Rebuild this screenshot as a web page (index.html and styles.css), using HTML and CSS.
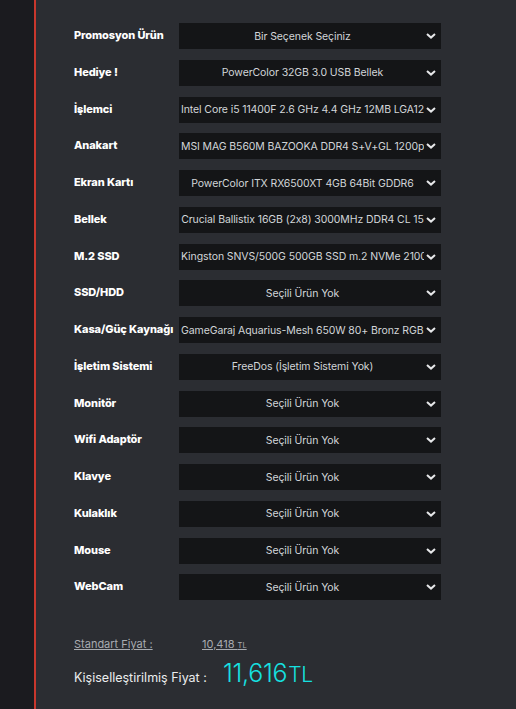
FILE: index.html
```html
<!DOCTYPE html>
<html lang="tr">
<head>
<meta charset="utf-8">
<link rel="stylesheet" href="styles.css">
</head>
<body>
<div class="page">
  <aside class="side"></aside>
  <main class="main">
    <div class="rows">
      <div class="row"><span class="label">Promosyon Ürün</span><div class="select"><span class="val">Bir Seçenek Seçiniz</span><svg class="chev" viewBox="0 0 10 6"><path d="M1 1l4 3.6L9 1"/></svg></div></div>
      <div class="row"><span class="label">Hediye !</span><div class="select"><span class="val">PowerColor 32GB 3.0 USB Bellek</span><svg class="chev" viewBox="0 0 10 6"><path d="M1 1l4 3.6L9 1"/></svg></div></div>
      <div class="row"><span class="label">İşlemci</span><div class="select"><span class="val">Intel Core i5 11400F 2.6 GHz 4.4 GHz 12MB LGA1200 İşlemci</span><svg class="chev" viewBox="0 0 10 6"><path d="M1 1l4 3.6L9 1"/></svg></div></div>
      <div class="row"><span class="label">Anakart</span><div class="select"><span class="val">MSI MAG B560M BAZOOKA DDR4 S+V+GL 1200p: Anakart</span><svg class="chev" viewBox="0 0 10 6"><path d="M1 1l4 3.6L9 1"/></svg></div></div>
      <div class="row"><span class="label">Ekran Kartı</span><div class="select"><span class="val">PowerColor ITX RX6500XT 4GB 64Bit GDDR6</span><svg class="chev" viewBox="0 0 10 6"><path d="M1 1l4 3.6L9 1"/></svg></div></div>
      <div class="row"><span class="label">Bellek</span><div class="select"><span class="val">Crucial Ballistix 16GB (2x8) 3000MHz DDR4 CL 15</span><svg class="chev" viewBox="0 0 10 6"><path d="M1 1l4 3.6L9 1"/></svg></div></div>
      <div class="row"><span class="label">M.2 SSD</span><div class="select"><span class="val">Kingston SNVS/500G 500GB SSD m.2 NVMe 2100/1700</span><svg class="chev" viewBox="0 0 10 6"><path d="M1 1l4 3.6L9 1"/></svg></div></div>
      <div class="row"><span class="label">SSD/HDD</span><div class="select"><span class="val">Seçili Ürün Yok</span><svg class="chev" viewBox="0 0 10 6"><path d="M1 1l4 3.6L9 1"/></svg></div></div>
      <div class="row"><span class="label">Kasa/Güç Kaynağı</span><div class="select"><span class="val">GameGaraj Aquarius-Mesh 650W 80+ Bronz RGB Kasa</span><svg class="chev" viewBox="0 0 10 6"><path d="M1 1l4 3.6L9 1"/></svg></div></div>
      <div class="row"><span class="label">İşletim Sistemi</span><div class="select"><span class="val">FreeDos (İşletim Sistemi Yok)</span><svg class="chev" viewBox="0 0 10 6"><path d="M1 1l4 3.6L9 1"/></svg></div></div>
      <div class="row"><span class="label">Monitör</span><div class="select"><span class="val">Seçili Ürün Yok</span><svg class="chev" viewBox="0 0 10 6"><path d="M1 1l4 3.6L9 1"/></svg></div></div>
      <div class="row"><span class="label">Wifi Adaptör</span><div class="select"><span class="val">Seçili Ürün Yok</span><svg class="chev" viewBox="0 0 10 6"><path d="M1 1l4 3.6L9 1"/></svg></div></div>
      <div class="row"><span class="label">Klavye</span><div class="select"><span class="val">Seçili Ürün Yok</span><svg class="chev" viewBox="0 0 10 6"><path d="M1 1l4 3.6L9 1"/></svg></div></div>
      <div class="row"><span class="label">Kulaklık</span><div class="select"><span class="val">Seçili Ürün Yok</span><svg class="chev" viewBox="0 0 10 6"><path d="M1 1l4 3.6L9 1"/></svg></div></div>
      <div class="row"><span class="label">Mouse</span><div class="select"><span class="val">Seçili Ürün Yok</span><svg class="chev" viewBox="0 0 10 6"><path d="M1 1l4 3.6L9 1"/></svg></div></div>
      <div class="row"><span class="label">WebCam</span><div class="select"><span class="val">Seçili Ürün Yok</span><svg class="chev" viewBox="0 0 10 6"><path d="M1 1l4 3.6L9 1"/></svg></div></div>
    </div>
    <div class="prices">
      <div class="std"><span class="std-label">Standart Fiyat :</span><span class="std-val">10,418 <small>TL</small></span></div>
      <div class="custom"><span class="custom-label">Kişiselleştirilmiş Fiyat :</span><span class="custom-val">11,616<span class="tl">TL</span></span></div>
    </div>
  </main>
</div>
</body>
</html>
```
FILE: styles.css
```css
html, body {
  margin: 0;
  padding: 0;
  height: 100%;
  background: #2b2d32;
}
.page {
  display: flex;
  min-height: 709px;
  font-family: "Inter", "DejaVu Sans", sans-serif;
}
.side {
  width: 34px;
  flex: none;
  background: #1b1b1f;
  border-right: 2px solid #c8372d;
}
.main {
  flex: 1;
  padding: 23px 0 0 38px;
}
.rows {
  display: flex;
  flex-direction: column;
  gap: 10.75px;
}
.row {
  display: flex;
  align-items: center;
  height: 26px;
}
.label {
  width: 105px;
  flex: none;
  color: #ffffff;
  font-size: 11px;
  font-weight: 800;
  margin-top: -2px;
  white-space: nowrap;
  letter-spacing: -0.1px;
}
.select {
  position: relative;
  width: 262px;
  height: 26px;
  background: #141517;
  display: flex;
  align-items: center;
  padding: 0 17px 0 2px;
  box-sizing: border-box;
  overflow: hidden;
}
.val {
  flex: 1;
  min-width: 0;
  overflow: hidden;
  white-space: nowrap;
  text-align: center;
  color: #d2d5d9;
  font-size: 10.5px;
  letter-spacing: -0.1px;
}
.chev {
  position: absolute;
  right: 5px;
  top: 10px;
  width: 10px;
  height: 6px;
  fill: none;
  stroke: #e6e7e9;
  stroke-width: 2;
}
.prices {
  padding-top: 35px;
}
.std {
  display: flex;
  font-size: 11px;
  color: #a8abb0;
  height: 16px;
  align-items: flex-end;
}
.std-label {
  width: 128px;
  text-decoration: underline;
}
.std-val {
  text-decoration: underline;
}
.std-val small {
  font-size: 7.5px;
}
.custom {
  display: flex;
  align-items: baseline;
  margin-top: 7px;
}
.custom-label {
  width: 149px;
  color: #ecedef;
  font-size: 12.5px;
}
.custom-val {
  color: #16e0e0;
  font-size: 25px;
  font-weight: 300;
  letter-spacing: -0.3px;
}
.custom-val .tl {
  font-size: 21px;
  margin-left: 1px;
}
```
